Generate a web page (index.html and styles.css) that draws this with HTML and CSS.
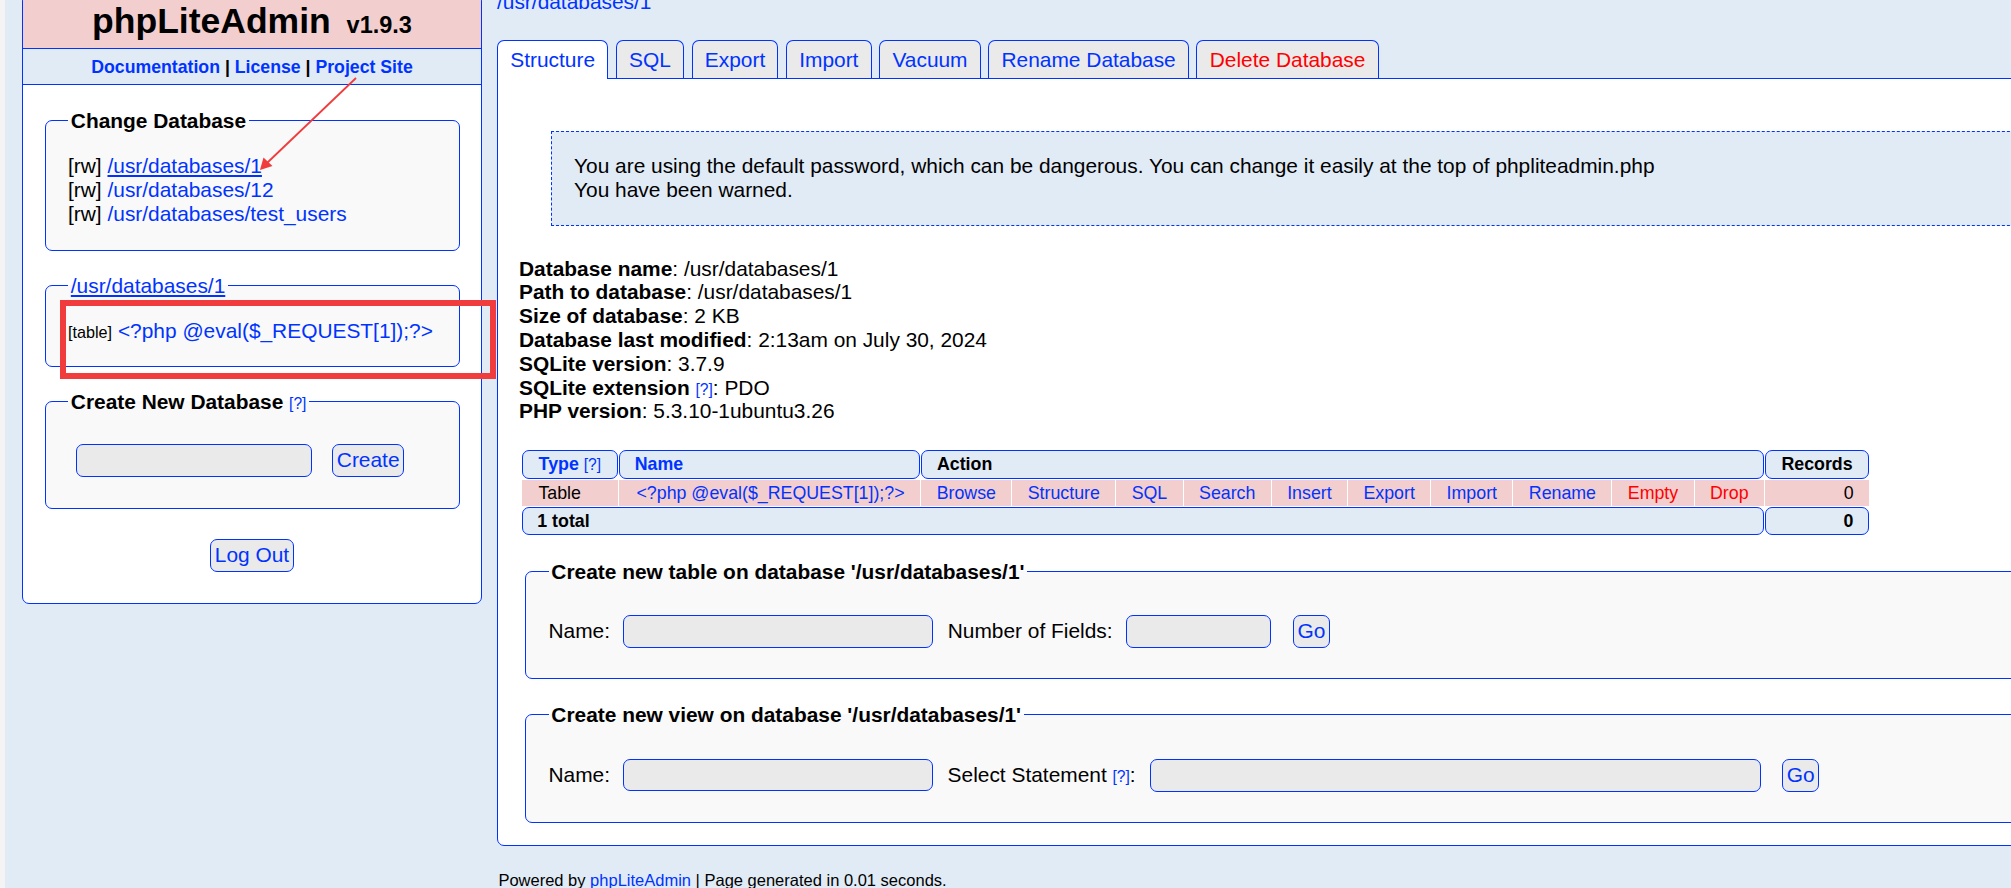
FILE: index.html
```html
<!DOCTYPE html>
<html lang="en">
<head>
<meta charset="utf-8">
<title>phpLiteAdmin</title>
<link rel="stylesheet" href="styles.css">
</head>
<body>
<div class="page">
  <aside class="leftnav">
    <h1 class="logo">phpLiteAdmin <span class="version">v1.9.3</span></h1>
    <div class="header-links"><a href="#">Documentation</a> | <a href="#">License</a> | <a href="#">Project Site</a></div>
    <fieldset class="box box-dbs">
      <legend>Change Database</legend>
      <div class="line">[rw] <a href="#" class="active">/usr/databases/1</a></div>
      <div class="line">[rw] <a href="#">/usr/databases/12</a></div>
      <div class="line">[rw] <a href="#">/usr/databases/test_users</a></div>
    </fieldset>
    <fieldset class="box box-tables">
      <legend class="legend-link"><a href="#" class="active">/usr/databases/1</a></legend>
      <div class="line"><span class="sidebar-table">[table]</span> <a href="#">&lt;?php @eval($_REQUEST[1]);?&gt;</a></div>
    </fieldset>
    <fieldset class="box box-create">
      <legend>Create New Database <a href="#" class="helpq">[?]</a></legend>
      <div class="create-row"><input type="text" class="field field-db"><button class="btn btn-create">Create</button></div>
    </fieldset>
    <div class="logout"><button class="btn">Log Out</button></div>
  </aside>

  <main class="content">
    <div class="crumb"><a href="#">/usr/databases/1</a></div>
    <nav class="tabs">
      <a href="#" class="tab current">Structure</a>
      <a href="#" class="tab">SQL</a>
      <a href="#" class="tab">Export</a>
      <a href="#" class="tab">Import</a>
      <a href="#" class="tab">Vacuum</a>
      <a href="#" class="tab">Rename Database</a>
      <a href="#" class="tab danger">Delete Database</a>
    </nav>
    <div class="main">
      <div class="confirm">You are using the default password, which can be dangerous. You can change it easily at the top of phpliteadmin.php<br>You have been warned.</div>
      <div class="info">
        <div><b>Database name</b>: /usr/databases/1</div>
        <div><b>Path to database</b>: /usr/databases/1</div>
        <div><b>Size of database</b>: 2 KB</div>
        <div><b>Database last modified</b>: 2:13am on July 30, 2024</div>
        <div><b>SQLite version</b>: 3.7.9</div>
        <div><b>SQLite extension</b> <a href="#" class="helpq">[?]</a>: PDO</div>
        <div><b>PHP version</b>: 5.3.10-1ubuntu3.26</div>
      </div>
      <table class="tbl">
        <tr class="head">
          <th class="tdheader th-type"><a href="#">Type</a> <a href="#" class="helpq">[?]</a></th>
          <th class="tdheader"><a href="#">Name</a></th>
          <th class="tdheader" colspan="10">Action</th>
          <th class="tdheader th-rec">Records</th>
        </tr>
        <tr class="row">
          <td class="left first">Table</td>
          <td class="left name"><a href="#">&lt;?php @eval($_REQUEST[1]);?&gt;</a></td>
          <td><a href="#">Browse</a></td>
          <td><a href="#">Structure</a></td>
          <td><a href="#">SQL</a></td>
          <td><a href="#">Search</a></td>
          <td><a href="#">Insert</a></td>
          <td><a href="#">Export</a></td>
          <td><a href="#">Import</a></td>
          <td><a href="#">Rename</a></td>
          <td><a href="#" class="danger">Empty</a></td>
          <td><a href="#" class="danger">Drop</a></td>
          <td class="num">0</td>
        </tr>
        <tr class="total">
          <td class="tdheader" colspan="12">1 total</td>
          <td class="tdheader num">0</td>
        </tr>
      </table>

      <fieldset class="box mbox mbox-table">
        <legend>Create new table on database '/usr/databases/1'</legend>
        <div class="form-row">
          <span class="lbl">Name:</span>
          <input type="text" class="field f-name">
          <span class="lbl lbl-fields">Number of Fields:</span>
          <input type="text" class="field f-num">
          <button class="btn btn-go">Go</button>
        </div>
      </fieldset>

      <fieldset class="box mbox mbox-view">
        <legend>Create new view on database '/usr/databases/1'</legend>
        <div class="form-row">
          <span class="lbl">Name:</span>
          <input type="text" class="field f-name">
          <span class="lbl lbl-select">Select Statement <a href="#" class="helpq">[?]</a>:</span>
          <input type="text" class="field f-select">
          <button class="btn btn-go2">Go</button>
        </div>
      </fieldset>
    </div>
    <div class="footer">Powered by <a href="#">phpLiteAdmin</a> | Page generated in 0.01 seconds.</div>
  </main>
</div>

<div class="annot-rect"></div>
<svg class="annot-arrow" width="2011" height="888" viewBox="0 0 2011 888">
  <line x1="356" y1="78" x2="267" y2="163" stroke="#f03c3c" stroke-width="1.8"/>
  <polygon points="260,170 263.5,157.5 272.5,166" fill="#f03c3c"/>
</svg>
</body>
</html>
```

FILE: styles.css
```css
* { box-sizing: border-box; }

html, body {
  margin: 0;
  padding: 0;
  overflow: hidden;
}

body {
  position: relative;
  height: 888px;
  font-family: "Liberation Sans", Arial, Helvetica, sans-serif;
  font-size: 20.9px;
  line-height: 23.8px;
  color: #000;
  background: #e0ebf6;
  border-left: 5px solid #f4f4f4;
}

a { color: #03f; text-decoration: none; }
a.active { text-decoration: underline; }
.danger, a.danger { color: #f00; }

.page {
  display: flex;
  align-items: flex-start;
  margin-top: -6px;
  padding-left: 17px;
}

/* ---------- left navigation ---------- */
.leftnav {
  flex: none;
  width: 460px;
  background: #fff;
  border: 1px solid #03f;
  border-radius: 7px;
  padding-bottom: 31px;
}

.logo {
  margin: 0;
  padding: 7px;
  font-size: 35.5px;
  line-height: 39px;
  text-align: center;
  background: #f3cece;
  border-radius: 6px 6px 0 0;
}
.version {
  margin-left: 6px;
  font-size: 23.5px;
  line-height: 1;
}

.header-links {
  text-align: center;
  padding: 7.5px 21px;
  border-top: 1px solid #03f;
  border-bottom: 1px solid #03f;
  background: #e0ebf6;
  font-size: 17.7px;
  line-height: 20.3px;
  font-weight: bold;
}

.box {
  min-width: 0;
  margin: 0 21px 0 22px;
  padding: 0 22px;
  border: 1px solid #03f;
  border-radius: 7px;
  background: #f9f9f9;
}
.box legend {
  padding: 0 2.8px;
  font-weight: bold;
  line-height: 23.6px;
}
.box legend.legend-link { font-weight: normal; }

.helpq {
  font-size: 15.6px;
  font-weight: normal;
  line-height: 1;
}

.line { line-height: 23.8px; }

.box-dbs { margin-top: 23.7px; padding-top: 21.7px; padding-bottom: 24.3px; }
.box-tables { margin-top: 23.2px; padding-top: 21.6px; padding-bottom: 22.8px; }
.box-create { margin-top: 23.2px; padding-top: 30.2px; padding-bottom: 31px; }

.sidebar-table { font-size: 16.2px; line-height: 1; }

.create-row { display: flex; align-items: center; padding-left: 8px; }

.field {
  display: block;
  height: 33px;
  margin: 0;
  padding: 0 4px;
  font: inherit;
  color: #03f;
  background: #eaeaea;
  border: 1px solid #03f;
  border-radius: 7px;
}
.field-db { width: 236px; }

.btn {
  display: block;
  height: 33px;
  margin: 0;
  padding: 0 3.8px;
  font-family: inherit;
  font-size: 20.9px;
  line-height: 1;
  color: #03f;
  background: #eaeaea;
  border: 1px solid #03f;
  border-radius: 7px;
}
.btn-create { margin-left: 20px; }

.logout { display: flex; justify-content: center; margin-top: 30px; }

/* ---------- content ---------- */
.content {
  flex: none;
  width: 1700px;
  padding-left: 15px;
}

.crumb {
  height: 23.6px;
  margin: -4.5px 0 26.9px;
  line-height: 23.6px;
}

.tabs {
  position: relative;
  z-index: 1;
  display: flex;
  align-items: flex-start;
  margin-bottom: -1px;
}
.tab {
  display: block;
  margin-right: 7.5px;
  padding: 7px 12.25px 6.4px;
  line-height: 23.6px;
  background: #eaeaea;
  border: 1px solid #03f;
  border-bottom: none;
  border-radius: 7px 7px 0 0;
}
.tab.current { background: #fff; padding-bottom: 7.4px; }

.main {
  background: #fff;
  border: 1px solid #03f;
  border-radius: 0 7px 7px 7px;
  padding: 21px 21px 21.4px;
}

.confirm {
  margin: 31px 0 0 32px;
  padding: 22.5px 22px 23px;
  background: #e0ebf6;
  border: 1px dashed #03f;
}

.info { margin-top: 30.5px; line-height: 23.8px; }

/* ---------- table ---------- */
.tbl {
  margin: 25.4px 0 0 1.6px;
  border-collapse: separate;
  border-spacing: 1.4px;
  font-size: 17.8px;
  line-height: 20px;
}
.tbl th, .tbl td {
  padding: 0 15.4px;
  white-space: nowrap;
  text-align: center;
}
.tbl .tdheader {
  padding: 0 14.7px;
  text-align: left;
  font-weight: bold;
  background: #e0ebf6;
  border: 1px solid #03f;
  border-radius: 7px;
}
.tbl .th-type { padding: 0 16px; }
.tbl .th-rec { padding: 0 15.5px; text-align: center; }
.tbl .head th { height: 29px; }
.tbl .row td { height: 26.3px; background: #f3cece; }
.tbl .total td { height: 28.6px; }
.tbl .left { text-align: left; }
.tbl .first { padding-left: 16.8px; }
.tbl .name { padding-left: 17.4px; padding-right: 15.7px; }
.tbl .num { text-align: right; }
.tbl .helpq { font-size: 15.6px; }

/* ---------- main fieldsets ---------- */
.mbox {
  margin: 0 0 0 5.5px;
  padding: 31.9px 23px 30.7px;
}
.mbox-table { margin-top: 23.1px; }
.mbox-view { margin-top: 23.9px; }

.form-row { display: flex; align-items: center; }
.lbl { white-space: nowrap; }
.f-name { width: 310px; height: 32.6px; margin-left: 13.4px; }
.lbl-fields { margin-left: 14.3px; }
.f-num { width: 145px; height: 32.6px; margin-left: 13.7px; }
.btn-go { width: 37px; height: 32.6px; margin-left: 21.4px; }
.lbl-select { margin-left: 14.2px; }
.f-select { width: 610.6px; margin-left: 14.4px; }
.btn-go2 { width: 37.5px; margin-left: 21.2px; }

.footer {
  margin-top: 25.3px;
  padding-left: 1.4px;
  font-size: 16.5px;
  line-height: 19px;
}

/* ---------- screenshot annotations ---------- */
.annot-rect {
  position: absolute;
  left: 55px;
  top: 300px;
  width: 436px;
  height: 78.5px;
  border: 6.5px solid #f03c3c;
}
.annot-arrow {
  position: absolute;
  left: -5px;
  top: 0;
  pointer-events: none;
}
```
